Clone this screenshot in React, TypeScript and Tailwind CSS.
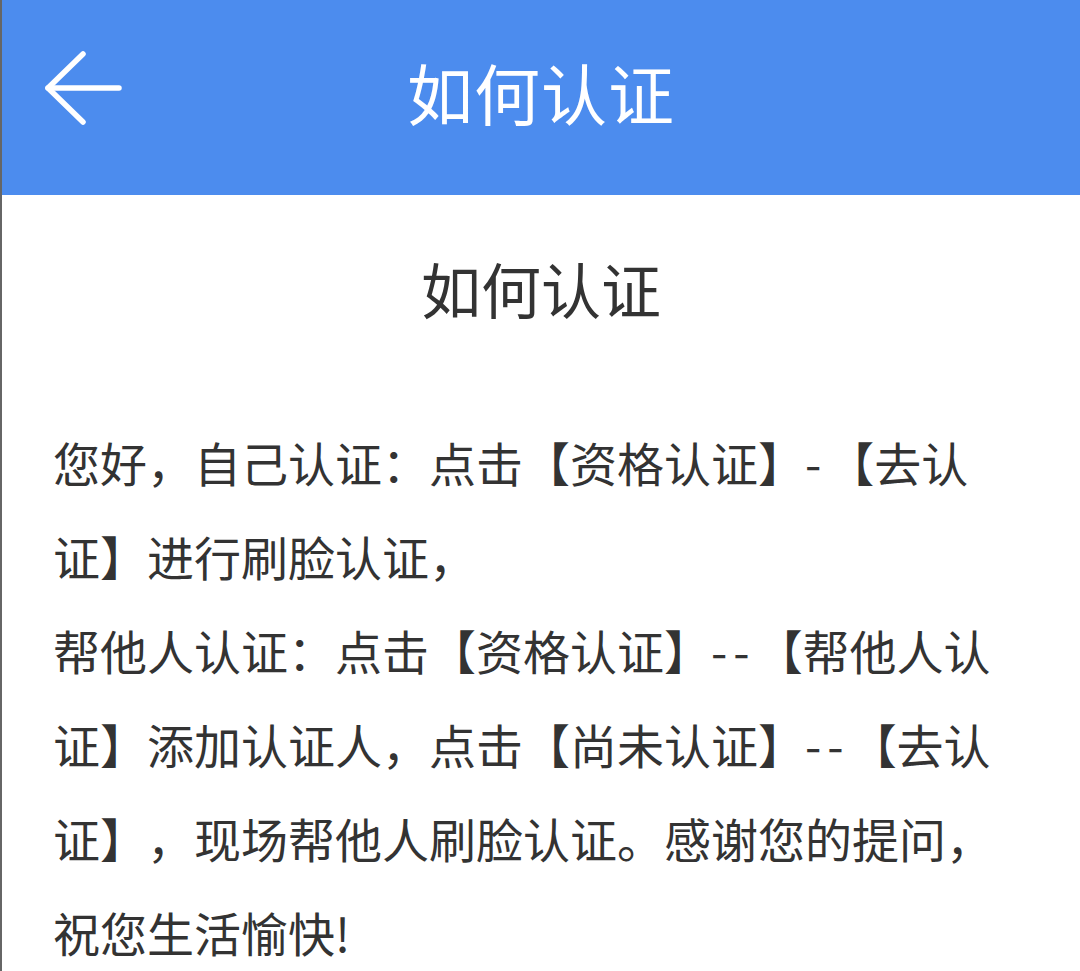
const Dash = ({ n }: { n: number }) => (
  <span className="tracking-[6px]">{'-'.repeat(n)}</span>
);

export default function App() {
  return (
    <div
      className="min-h-[971px] bg-white border-l-2 border-black/60 text-[#333333] [text-spacing-trim:space-all]"
      style={{ fontFamily: '"Noto Sans CJK SC", "Noto Sans", sans-serif' }}
    >
      {/* Header */}
      <div className="relative h-[195px] bg-[#4c8cee] flex items-center justify-center">
        <button className="absolute left-[40px] top-[48px] w-[84px] h-[80px] flex items-center justify-center">
          <svg width="84" height="80" viewBox="0 0 84 80" fill="none" stroke="white" strokeWidth="5.5" strokeLinecap="round" strokeLinejoin="round">
            <path d="M6 40 H77" />
            <path d="M41 6 L6 40 L41 74" />
          </svg>
        </button>
        <h1 className="text-white text-[66px] leading-none tracking-[1px] -mt-[14px]">如何认证</h1>
      </div>

      {/* Content */}
      <h2 className="mt-[48px] text-center text-[60px] leading-[90px]">如何认证</h2>
      <p className="mt-[82px] pl-[51px] w-[1010px] text-[47px] leading-[94px]">
        您好，自己认证：点击【资格认证】<Dash n={1} />【去认证】进行刷脸认证，
        <br />
        帮他人认证：点击【资格认证】<Dash n={2} />【帮他人认证】添加认证人，点击【尚未认证】<Dash n={2} />【去认证】，现场帮他人刷脸认证。感谢您的提问，祝您生活愉快!
      </p>
    </div>
  );
}
